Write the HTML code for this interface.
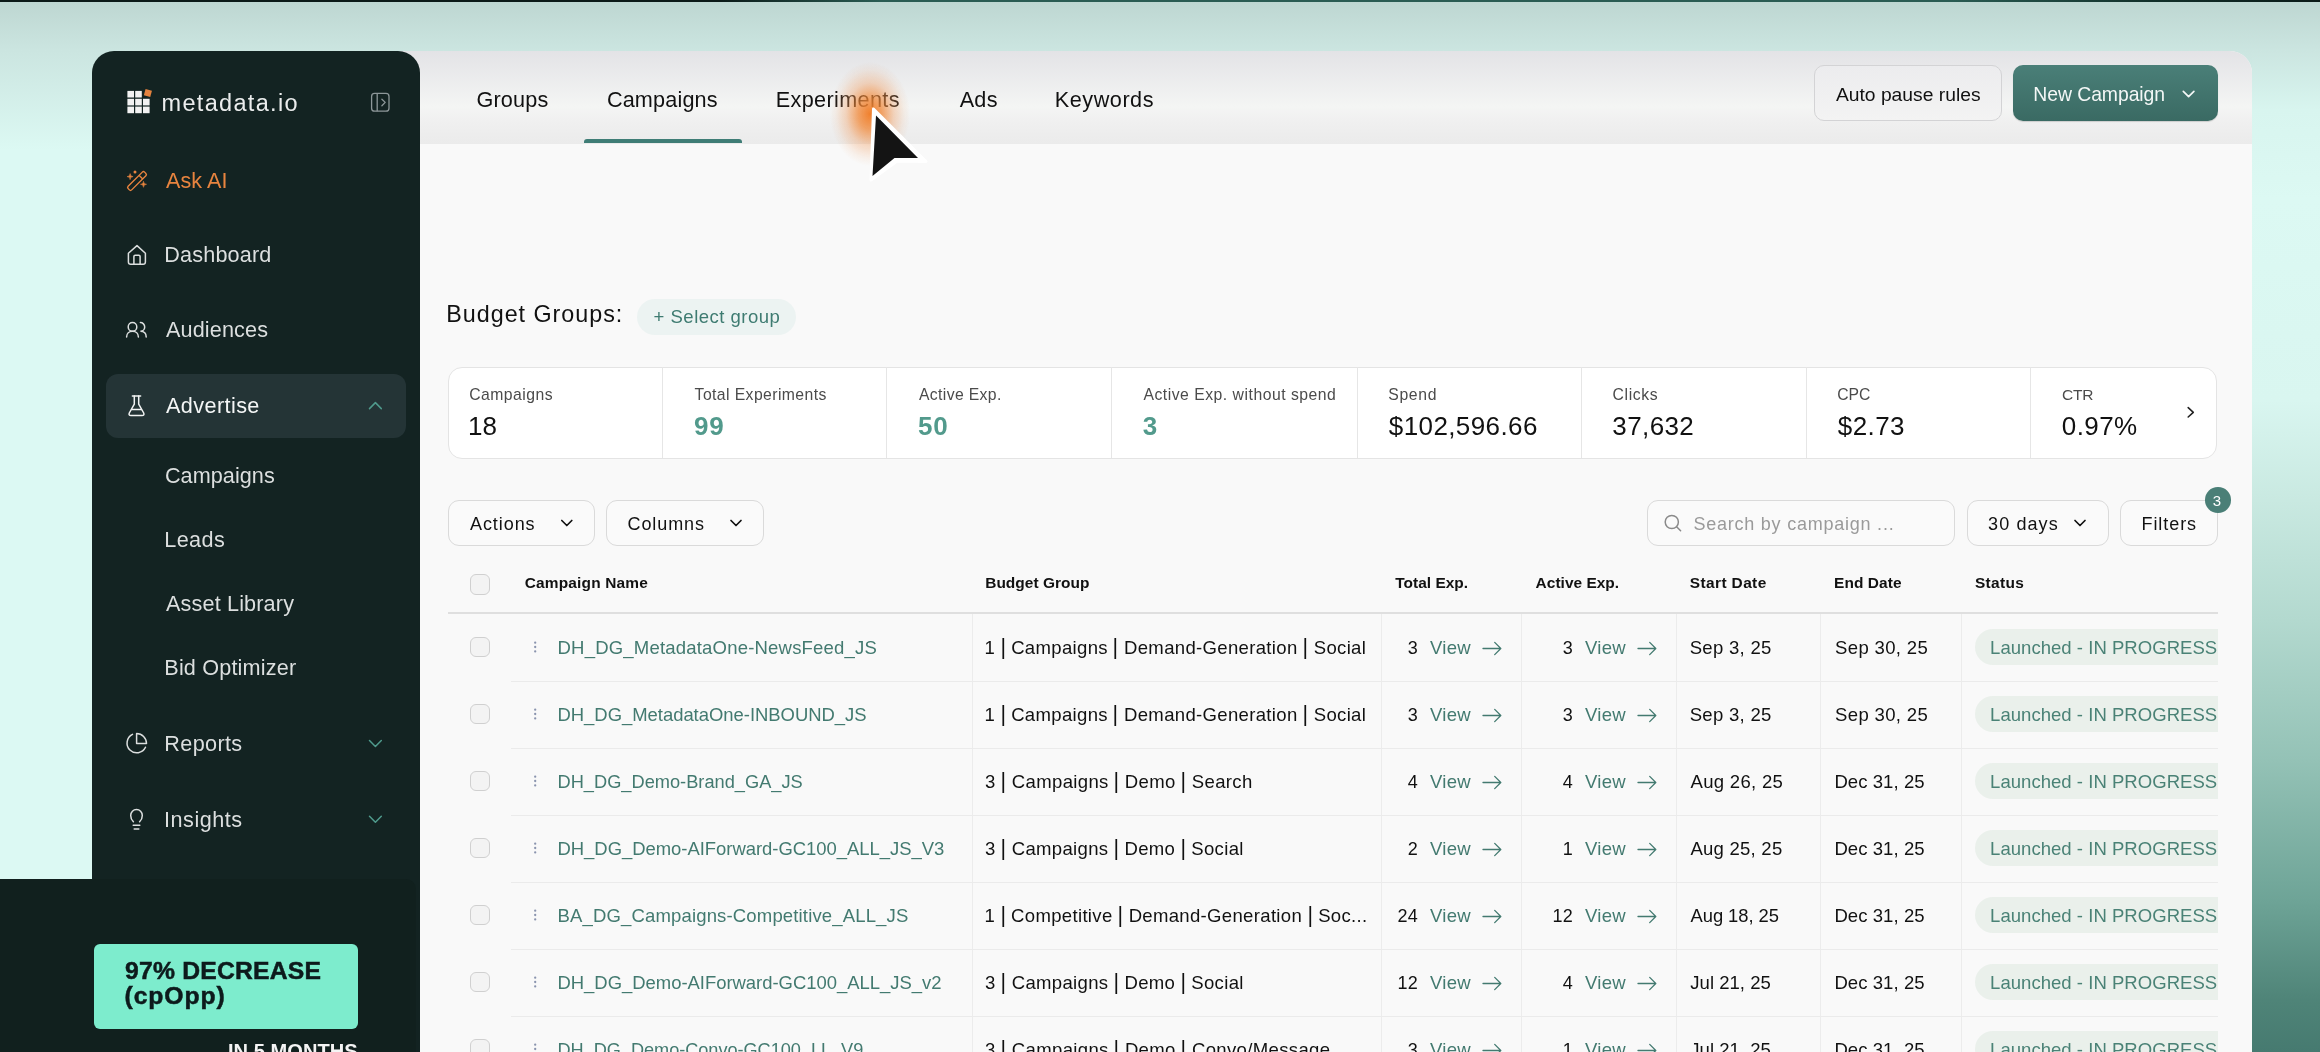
<!DOCTYPE html><html><head><meta charset="utf-8"><style>
*{margin:0;padding:0;box-sizing:border-box}
html,body{width:2320px;height:1052px;overflow:hidden}
body{font-family:"Liberation Sans",sans-serif;position:relative;background:#dcf9f3}
.t{position:absolute;white-space:nowrap}
#w{position:absolute;left:0;top:0;width:2320px;height:1052px;will-change:transform}
.abs{position:absolute}
svg{position:absolute;left:0;top:0;overflow:visible}
</style></head><body><div id="w">
<div class="abs" style="left:0px;top:0px;width:2320.0px;height:1052.0px;background:linear-gradient(180deg,#bdd6d1 0px,#cbe5e0 50px,#dcf9f3 150px,#dcf9f3 100%)"></div>
<div class="abs" style="left:2252px;top:0px;width:68.0px;height:1052.0px;background:linear-gradient(180deg,#bdd6d1 0px,#cbe5e0 50px,#d8f5ef 110px,#dcf9f3 200px,#d9f6f0 400px,#c9e9e1 500px,#b3d9cf 620px,#94c2b6 760px,#6ea497 900px,#4f8478 1000px,#467a70 1052px)"></div>
<div class="abs" style="left:0px;top:0px;width:2320.0px;height:2.0px;background:linear-gradient(90deg,#0b1a18 0px,#0b1a18 720px,#2a5c53 880px,#2a5c53 1950px,#12302a 2150px,#0b1a18 2320px)"></div>
<div class="abs" style="left:400px;top:51px;width:1852.0px;height:1001.0px;background:#f9f9f9;border-top-right-radius:22px;overflow:hidden"></div>
<div class="abs" style="left:400px;top:51px;width:1852.0px;height:92.5px;background:linear-gradient(180deg,#e3e3e6 0%,#f4f5f4 60%,#f0f0f0 75%,#ebebeb 100%);border-top-right-radius:22px"></div>
<div class="t" style="left:476.4px;top:89.1px;font-size:21.63px;line-height:21.63px;color:#111;letter-spacing:0.190px;">Groups</div>
<div class="t" style="left:606.9px;top:89.1px;font-size:21.63px;line-height:21.63px;color:#111;letter-spacing:0.162px;">Campaigns</div>
<div class="t" style="left:775.8px;top:89.1px;font-size:21.63px;line-height:21.63px;color:#111;letter-spacing:0.355px;">Experiments</div>
<div class="t" style="left:959.7px;top:89.1px;font-size:21.63px;line-height:21.63px;color:#111;letter-spacing:0.250px;">Ads</div>
<div class="t" style="left:1054.8px;top:89.1px;font-size:21.63px;line-height:21.63px;color:#111;letter-spacing:0.536px;">Keywords</div>
<div class="abs" style="left:583.5px;top:138.5px;width:158.5px;height:4.0px;background:#3f7d76;border-radius:3px 3px 0 0"></div>
<div class="abs" style="left:1813.8px;top:65.1px;width:188.0px;height:56.4px;border:1px solid #d3d3d5;border-radius:10px;background:linear-gradient(180deg,#ececee,#f3f3f3)"></div>
<div class="t" style="left:1835.9px;top:84.7px;font-size:19.27px;line-height:19.27px;color:#111;letter-spacing:0.003px;">Auto pause rules</div>
<div class="abs" style="left:2012.8px;top:65.1px;width:205.2px;height:56.4px;border-radius:10px;background:linear-gradient(180deg,#4a7f78,#3a6a63);box-shadow:0 1px 1px rgba(0,0,0,.15)"></div>
<div class="t" style="left:2033.3px;top:84.6px;font-size:19.39px;line-height:19.39px;color:#f3f7f6;letter-spacing:-0.059px;">New Campaign</div>
<div class="t" style="left:446.3px;top:303.1px;font-size:23.32px;line-height:23.32px;color:#111;letter-spacing:0.973px;">Budget Groups:</div>
<div class="abs" style="left:637.4px;top:298.9px;width:158.6px;height:36.1px;background:#ecf3f2;border-radius:18px"></div>
<div class="t" style="left:653.6px;top:307.5px;font-size:18.54px;line-height:18.54px;color:#3e7b71;letter-spacing:0.477px;">+ Select group</div>
<div class="abs" style="left:448px;top:366.5px;width:1769.0px;height:92.0px;background:#fff;border:1px solid #e4e4e4;border-radius:14px"></div>
<div class="abs" style="left:662.1px;top:367px;width:1.0px;height:91.0px;background:#e6e6e6"></div>
<div class="abs" style="left:886.3px;top:367px;width:1.0px;height:91.0px;background:#e6e6e6"></div>
<div class="abs" style="left:1110.8px;top:367px;width:1.0px;height:91.0px;background:#e6e6e6"></div>
<div class="abs" style="left:1356.8px;top:367px;width:1.0px;height:91.0px;background:#e6e6e6"></div>
<div class="abs" style="left:1581.0px;top:367px;width:1.0px;height:91.0px;background:#e6e6e6"></div>
<div class="abs" style="left:1805.7px;top:367px;width:1.0px;height:91.0px;background:#e6e6e6"></div>
<div class="abs" style="left:2029.7px;top:367px;width:1.0px;height:91.0px;background:#e6e6e6"></div>
<div class="t" style="left:469.2px;top:386.9px;font-size:15.75px;line-height:15.75px;color:#4b4b4b;letter-spacing:0.469px;">Campaigns</div>
<div class="t" style="left:468.0px;top:412.8px;font-size:26px;line-height:26px;color:#111;letter-spacing:0px;">18</div>
<div class="t" style="left:694.6px;top:386.9px;font-size:15.75px;line-height:15.75px;color:#4b4b4b;letter-spacing:0.409px;">Total Experiments</div>
<div class="t" style="left:694.1px;top:412.8px;font-size:26px;line-height:26px;color:#529a8c;font-weight:700;letter-spacing:0.8px;">99</div>
<div class="t" style="left:919.0px;top:386.9px;font-size:15.75px;line-height:15.75px;color:#4b4b4b;letter-spacing:0.350px;">Active Exp.</div>
<div class="t" style="left:918.1px;top:412.8px;font-size:26px;line-height:26px;color:#529a8c;font-weight:700;letter-spacing:0.8px;">50</div>
<div class="t" style="left:1143.4px;top:386.9px;font-size:15.75px;line-height:15.75px;color:#4b4b4b;letter-spacing:0.506px;">Active Exp. without spend</div>
<div class="t" style="left:1142.8px;top:412.8px;font-size:26px;line-height:26px;color:#529a8c;font-weight:700;letter-spacing:0.8px;">3</div>
<div class="t" style="left:1388.3px;top:386.9px;font-size:15.75px;line-height:15.75px;color:#4b4b4b;letter-spacing:0.637px;">Spend</div>
<div class="t" style="left:1388.8px;top:412.8px;font-size:26px;line-height:26px;color:#111;letter-spacing:0.4px;">$102,596.66</div>
<div class="t" style="left:1612.5px;top:386.9px;font-size:15.75px;line-height:15.75px;color:#4b4b4b;letter-spacing:0.650px;">Clicks</div>
<div class="t" style="left:1612.3px;top:412.8px;font-size:26px;line-height:26px;color:#111;letter-spacing:0.4px;">37,632</div>
<div class="t" style="left:1837.2px;top:386.9px;font-size:15.72px;line-height:15.72px;color:#4b4b4b;letter-spacing:-0.025px;">CPC</div>
<div class="t" style="left:1837.8px;top:412.8px;font-size:26px;line-height:26px;color:#111;letter-spacing:0.4px;">$2.73</div>
<div class="t" style="left:2062.0px;top:387.1px;font-size:15.49px;line-height:15.49px;color:#4b4b4b;letter-spacing:-0.150px;">CTR</div>
<div class="t" style="left:2061.8px;top:412.8px;font-size:26px;line-height:26px;color:#111;letter-spacing:0.4px;">0.97%</div>
<div class="abs" style="left:448px;top:500.3px;width:146.6px;height:45.9px;border:1.3px solid #dadada;border-radius:11px;background:#fafafa"></div>
<div class="t" style="left:470.0px;top:514.5px;font-size:18.03px;line-height:18.03px;color:#111;letter-spacing:0.925px;">Actions</div>
<div class="abs" style="left:606px;top:500.3px;width:157.6px;height:45.9px;border:1.3px solid #dadada;border-radius:11px;background:#fafafa"></div>
<div class="t" style="left:627.5px;top:514.5px;font-size:18.03px;line-height:18.03px;color:#111;letter-spacing:0.908px;">Columns</div>
<div class="abs" style="left:1646.7px;top:500.3px;width:308.6px;height:45.9px;border:1.3px solid #dadada;border-radius:11px;background:#fafafa"></div>
<div class="t" style="left:1693.4px;top:514.5px;font-size:18.03px;line-height:18.03px;color:#9a9a9a;letter-spacing:0.762px;">Search by campaign ...</div>
<div class="abs" style="left:1966.6px;top:500.3px;width:142.9px;height:45.9px;border:1.3px solid #dadada;border-radius:11px;background:#fafafa"></div>
<div class="t" style="left:1988.1px;top:514.5px;font-size:18.03px;line-height:18.03px;color:#111;letter-spacing:1.083px;">30 days</div>
<div class="abs" style="left:2120.2px;top:500.3px;width:97.6px;height:45.9px;border:1.3px solid #dadada;border-radius:11px;background:#fafafa"></div>
<div class="t" style="left:2141.5px;top:514.5px;font-size:18.03px;line-height:18.03px;color:#111;letter-spacing:0.925px;">Filters</div>
<div class="abs" style="left:2205px;top:487.2px;width:25.6px;height:25.6px;background:#4a7f77;border-radius:50%"></div>
<div class="t" style="left:2212.8px;top:493.3px;font-size:15px;line-height:15px;color:#fff;">3</div>
<div class="abs" style="left:469.5px;top:574.3px;width:20.5px;height:20.5px;border:1.4px solid #d0d0d0;border-radius:6px;background:#f3f3f3"></div>
<div class="t" style="left:524.7px;top:575.3px;font-size:15.45px;line-height:15.45px;color:#111;font-weight:700;letter-spacing:0.179px;">Campaign Name</div>
<div class="t" style="left:985.2px;top:575.3px;font-size:15.45px;line-height:15.45px;color:#111;font-weight:700;letter-spacing:0.045px;">Budget Group</div>
<div class="t" style="left:1395.2px;top:575.3px;font-size:15.45px;line-height:15.45px;color:#111;font-weight:700;letter-spacing:0.033px;">Total Exp.</div>
<div class="t" style="left:1535.6px;top:575.3px;font-size:15.45px;line-height:15.45px;color:#111;font-weight:700;letter-spacing:0.030px;">Active Exp.</div>
<div class="t" style="left:1689.8px;top:575.3px;font-size:15.45px;line-height:15.45px;color:#111;font-weight:700;letter-spacing:0.389px;">Start Date</div>
<div class="t" style="left:1834.0px;top:575.3px;font-size:15.45px;line-height:15.45px;color:#111;font-weight:700;letter-spacing:0.100px;">End Date</div>
<div class="t" style="left:1974.9px;top:575.3px;font-size:15.45px;line-height:15.45px;color:#111;font-weight:700;letter-spacing:0.370px;">Status</div>
<div class="abs" style="left:448px;top:612.3px;width:1770.0px;height:2.0px;background:#dfdfdf"></div>
<div class="abs" style="left:0;top:0;width:2218px;height:1052px;overflow:hidden">
<div class="abs" style="left:971.5px;top:614.3px;width:1.0px;height:437.7px;background:#ececec"></div>
<div class="abs" style="left:1380.5px;top:614.3px;width:1.0px;height:437.7px;background:#ececec"></div>
<div class="abs" style="left:1521.3px;top:614.3px;width:1.0px;height:437.7px;background:#ececec"></div>
<div class="abs" style="left:1676.1px;top:614.3px;width:1.0px;height:437.7px;background:#ececec"></div>
<div class="abs" style="left:1820.3px;top:614.3px;width:1.0px;height:437.7px;background:#ececec"></div>
<div class="abs" style="left:1961.0px;top:614.3px;width:1.0px;height:437.7px;background:#ececec"></div>
<div class="abs" style="left:511px;top:680.5px;width:1707.0px;height:1.0px;background:#ebebeb"></div>
<div class="abs" style="left:469.5px;top:636.8px;width:20.5px;height:20.5px;border:1.4px solid #d0d0d0;border-radius:6px;background:#f3f3f3"></div>
<div class="t" style="left:557.5px;top:638.9px;font-size:18.54px;line-height:18.54px;color:#437a70;letter-spacing:0.188px;">DH_DG_MetadataOne-NewsFeed_JS</div>
<div class="t" style="left:984.4px;top:638.9px;font-size:18.54px;line-height:18.54px;color:#111;letter-spacing:0.333px;">1 <span style="display:inline-block;transform:scale(1.15,1.2);transform-origin:50% 72%">|</span> Campaigns <span style="display:inline-block;transform:scale(1.15,1.2);transform-origin:50% 72%">|</span> Demand-Generation <span style="display:inline-block;transform:scale(1.15,1.2);transform-origin:50% 72%">|</span> Social</div>
<div class="t" style="right:800px;top:639.4px;font-size:18px;line-height:18px;color:#111;letter-spacing:0.3px">3</div>
<div class="t" style="left:1429.9px;top:638.9px;font-size:18.54px;line-height:18.54px;color:#437a70;letter-spacing:0.333px;">View</div>
<div class="t" style="right:645px;top:639.4px;font-size:18px;line-height:18px;color:#111;letter-spacing:0.3px">3</div>
<div class="t" style="left:1584.9px;top:638.9px;font-size:18.54px;line-height:18.54px;color:#437a70;letter-spacing:0.333px;">View</div>
<div class="t" style="left:1689.7px;top:638.9px;font-size:18.54px;line-height:18.54px;color:#111;letter-spacing:0.281px;">Sep 3, 25</div>
<div class="t" style="left:1835.1px;top:638.9px;font-size:18.54px;line-height:18.54px;color:#111;letter-spacing:0.333px;">Sep 30, 25</div>
<div class="abs" style="left:1975.4px;top:629px;width:324.6px;height:36.0px;background:#eaf0eb;border-radius:18px"></div>
<div class="t" style="left:1990.1px;top:638.9px;font-size:18.54px;line-height:18.54px;color:#4a8276;letter-spacing:0.024px;">Launched - IN PROGRESS</div>
<div class="abs" style="left:511px;top:747.5px;width:1707.0px;height:1.0px;background:#ebebeb"></div>
<div class="abs" style="left:469.5px;top:703.8px;width:20.5px;height:20.5px;border:1.4px solid #d0d0d0;border-radius:6px;background:#f3f3f3"></div>
<div class="t" style="left:557.5px;top:706.0px;font-size:18.47px;line-height:18.47px;color:#437a70;letter-spacing:-0.024px;">DH_DG_MetadataOne-INBOUND_JS</div>
<div class="t" style="left:984.4px;top:705.9px;font-size:18.54px;line-height:18.54px;color:#111;letter-spacing:0.333px;">1 <span style="display:inline-block;transform:scale(1.15,1.2);transform-origin:50% 72%">|</span> Campaigns <span style="display:inline-block;transform:scale(1.15,1.2);transform-origin:50% 72%">|</span> Demand-Generation <span style="display:inline-block;transform:scale(1.15,1.2);transform-origin:50% 72%">|</span> Social</div>
<div class="t" style="right:800px;top:706.4px;font-size:18px;line-height:18px;color:#111;letter-spacing:0.3px">3</div>
<div class="t" style="left:1429.9px;top:705.9px;font-size:18.54px;line-height:18.54px;color:#437a70;letter-spacing:0.333px;">View</div>
<div class="t" style="right:645px;top:706.4px;font-size:18px;line-height:18px;color:#111;letter-spacing:0.3px">3</div>
<div class="t" style="left:1584.9px;top:705.9px;font-size:18.54px;line-height:18.54px;color:#437a70;letter-spacing:0.333px;">View</div>
<div class="t" style="left:1689.7px;top:705.9px;font-size:18.54px;line-height:18.54px;color:#111;letter-spacing:0.281px;">Sep 3, 25</div>
<div class="t" style="left:1835.1px;top:705.9px;font-size:18.54px;line-height:18.54px;color:#111;letter-spacing:0.333px;">Sep 30, 25</div>
<div class="abs" style="left:1975.4px;top:696px;width:324.6px;height:36.0px;background:#eaf0eb;border-radius:18px"></div>
<div class="t" style="left:1990.1px;top:705.9px;font-size:18.54px;line-height:18.54px;color:#4a8276;letter-spacing:0.024px;">Launched - IN PROGRESS</div>
<div class="abs" style="left:511px;top:814.5px;width:1707.0px;height:1.0px;background:#ebebeb"></div>
<div class="abs" style="left:469.5px;top:770.8px;width:20.5px;height:20.5px;border:1.4px solid #d0d0d0;border-radius:6px;background:#f3f3f3"></div>
<div class="t" style="left:557.5px;top:773.2px;font-size:18.24px;line-height:18.24px;color:#437a70;letter-spacing:0.000px;">DH_DG_Demo-Brand_GA_JS</div>
<div class="t" style="left:985.0px;top:772.9px;font-size:18.54px;line-height:18.54px;color:#111;letter-spacing:0.344px;">3 <span style="display:inline-block;transform:scale(1.15,1.2);transform-origin:50% 72%">|</span> Campaigns <span style="display:inline-block;transform:scale(1.15,1.2);transform-origin:50% 72%">|</span> Demo <span style="display:inline-block;transform:scale(1.15,1.2);transform-origin:50% 72%">|</span> Search</div>
<div class="t" style="right:800px;top:773.4px;font-size:18px;line-height:18px;color:#111;letter-spacing:0.3px">4</div>
<div class="t" style="left:1429.9px;top:772.9px;font-size:18.54px;line-height:18.54px;color:#437a70;letter-spacing:0.333px;">View</div>
<div class="t" style="right:645px;top:773.4px;font-size:18px;line-height:18px;color:#111;letter-spacing:0.3px">4</div>
<div class="t" style="left:1584.9px;top:772.9px;font-size:18.54px;line-height:18.54px;color:#437a70;letter-spacing:0.333px;">View</div>
<div class="t" style="left:1690.5px;top:772.9px;font-size:18.54px;line-height:18.54px;color:#111;letter-spacing:0.306px;">Aug 26, 25</div>
<div class="t" style="left:1834.4px;top:772.9px;font-size:18.54px;line-height:18.54px;color:#111;letter-spacing:0.061px;">Dec 31, 25</div>
<div class="abs" style="left:1975.4px;top:763px;width:324.6px;height:36.0px;background:#eaf0eb;border-radius:18px"></div>
<div class="t" style="left:1990.1px;top:772.9px;font-size:18.54px;line-height:18.54px;color:#4a8276;letter-spacing:0.024px;">Launched - IN PROGRESS</div>
<div class="abs" style="left:511px;top:881.5px;width:1707.0px;height:1.0px;background:#ebebeb"></div>
<div class="abs" style="left:469.5px;top:837.8px;width:20.5px;height:20.5px;border:1.4px solid #d0d0d0;border-radius:6px;background:#f3f3f3"></div>
<div class="t" style="left:557.5px;top:840.0px;font-size:18.45px;line-height:18.45px;color:#437a70;letter-spacing:-0.024px;">DH_DG_Demo-AIForward-GC100_ALL_JS_V3</div>
<div class="t" style="left:985.0px;top:839.9px;font-size:18.54px;line-height:18.54px;color:#111;letter-spacing:0.325px;">3 <span style="display:inline-block;transform:scale(1.15,1.2);transform-origin:50% 72%">|</span> Campaigns <span style="display:inline-block;transform:scale(1.15,1.2);transform-origin:50% 72%">|</span> Demo <span style="display:inline-block;transform:scale(1.15,1.2);transform-origin:50% 72%">|</span> Social</div>
<div class="t" style="right:800px;top:840.4px;font-size:18px;line-height:18px;color:#111;letter-spacing:0.3px">2</div>
<div class="t" style="left:1429.9px;top:839.9px;font-size:18.54px;line-height:18.54px;color:#437a70;letter-spacing:0.333px;">View</div>
<div class="t" style="right:645px;top:840.4px;font-size:18px;line-height:18px;color:#111;letter-spacing:0.3px">1</div>
<div class="t" style="left:1584.9px;top:839.9px;font-size:18.54px;line-height:18.54px;color:#437a70;letter-spacing:0.333px;">View</div>
<div class="t" style="left:1690.5px;top:839.9px;font-size:18.54px;line-height:18.54px;color:#111;letter-spacing:0.228px;">Aug 25, 25</div>
<div class="t" style="left:1834.4px;top:839.9px;font-size:18.54px;line-height:18.54px;color:#111;letter-spacing:0.061px;">Dec 31, 25</div>
<div class="abs" style="left:1975.4px;top:830px;width:324.6px;height:36.0px;background:#eaf0eb;border-radius:18px"></div>
<div class="t" style="left:1990.1px;top:839.9px;font-size:18.54px;line-height:18.54px;color:#4a8276;letter-spacing:0.024px;">Launched - IN PROGRESS</div>
<div class="abs" style="left:511px;top:948.5px;width:1707.0px;height:1.0px;background:#ebebeb"></div>
<div class="abs" style="left:469.5px;top:904.8px;width:20.5px;height:20.5px;border:1.4px solid #d0d0d0;border-radius:6px;background:#f3f3f3"></div>
<div class="t" style="left:557.5px;top:906.9px;font-size:18.54px;line-height:18.54px;color:#437a70;letter-spacing:0.144px;">BA_DG_Campaigns-Competitive_ALL_JS</div>
<div class="t" style="left:984.4px;top:906.9px;font-size:18.54px;line-height:18.54px;color:#111;letter-spacing:0.325px;">1 <span style="display:inline-block;transform:scale(1.15,1.2);transform-origin:50% 72%">|</span> Competitive <span style="display:inline-block;transform:scale(1.15,1.2);transform-origin:50% 72%">|</span> Demand-Generation <span style="display:inline-block;transform:scale(1.15,1.2);transform-origin:50% 72%">|</span> Soc...</div>
<div class="t" style="right:800px;top:907.4px;font-size:18px;line-height:18px;color:#111;letter-spacing:0.3px">24</div>
<div class="t" style="left:1429.9px;top:906.9px;font-size:18.54px;line-height:18.54px;color:#437a70;letter-spacing:0.333px;">View</div>
<div class="t" style="right:645px;top:907.4px;font-size:18px;line-height:18px;color:#111;letter-spacing:0.3px">12</div>
<div class="t" style="left:1584.9px;top:906.9px;font-size:18.54px;line-height:18.54px;color:#437a70;letter-spacing:0.333px;">View</div>
<div class="t" style="left:1690.5px;top:907.0px;font-size:18.39px;line-height:18.39px;color:#111;letter-spacing:-0.044px;">Aug 18, 25</div>
<div class="t" style="left:1834.4px;top:906.9px;font-size:18.54px;line-height:18.54px;color:#111;letter-spacing:0.061px;">Dec 31, 25</div>
<div class="abs" style="left:1975.4px;top:897px;width:324.6px;height:36.0px;background:#eaf0eb;border-radius:18px"></div>
<div class="t" style="left:1990.1px;top:906.9px;font-size:18.54px;line-height:18.54px;color:#4a8276;letter-spacing:0.024px;">Launched - IN PROGRESS</div>
<div class="abs" style="left:511px;top:1015.5px;width:1707.0px;height:1.0px;background:#ebebeb"></div>
<div class="abs" style="left:469.5px;top:971.8px;width:20.5px;height:20.5px;border:1.4px solid #d0d0d0;border-radius:6px;background:#f3f3f3"></div>
<div class="t" style="left:557.5px;top:974.0px;font-size:18.46px;line-height:18.46px;color:#437a70;letter-spacing:-0.019px;">DH_DG_Demo-AIForward-GC100_ALL_JS_v2</div>
<div class="t" style="left:985.0px;top:973.9px;font-size:18.54px;line-height:18.54px;color:#111;letter-spacing:0.325px;">3 <span style="display:inline-block;transform:scale(1.15,1.2);transform-origin:50% 72%">|</span> Campaigns <span style="display:inline-block;transform:scale(1.15,1.2);transform-origin:50% 72%">|</span> Demo <span style="display:inline-block;transform:scale(1.15,1.2);transform-origin:50% 72%">|</span> Social</div>
<div class="t" style="right:800px;top:974.4px;font-size:18px;line-height:18px;color:#111;letter-spacing:0.3px">12</div>
<div class="t" style="left:1429.9px;top:973.9px;font-size:18.54px;line-height:18.54px;color:#437a70;letter-spacing:0.333px;">View</div>
<div class="t" style="right:645px;top:974.4px;font-size:18px;line-height:18px;color:#111;letter-spacing:0.3px">4</div>
<div class="t" style="left:1584.9px;top:973.9px;font-size:18.54px;line-height:18.54px;color:#437a70;letter-spacing:0.333px;">View</div>
<div class="t" style="left:1690.3px;top:973.9px;font-size:18.54px;line-height:18.54px;color:#111;letter-spacing:0.017px;">Jul 21, 25</div>
<div class="t" style="left:1834.4px;top:973.9px;font-size:18.54px;line-height:18.54px;color:#111;letter-spacing:0.061px;">Dec 31, 25</div>
<div class="abs" style="left:1975.4px;top:964px;width:324.6px;height:36.0px;background:#eaf0eb;border-radius:18px"></div>
<div class="t" style="left:1990.1px;top:973.9px;font-size:18.54px;line-height:18.54px;color:#4a8276;letter-spacing:0.024px;">Launched - IN PROGRESS</div>
<div class="abs" style="left:469.5px;top:1038.8px;width:20.5px;height:20.5px;border:1.4px solid #d0d0d0;border-radius:6px;background:#f3f3f3"></div>
<div class="t" style="left:557.5px;top:1041.2px;font-size:18.16px;line-height:18.16px;color:#437a70;letter-spacing:-0.039px;">DH_DG_Demo-Convo-GC100_LL_V9</div>
<div class="t" style="left:985.0px;top:1040.9px;font-size:18.54px;line-height:18.54px;color:#111;letter-spacing:0.350px;">3 <span style="display:inline-block;transform:scale(1.15,1.2);transform-origin:50% 72%">|</span> Campaigns <span style="display:inline-block;transform:scale(1.15,1.2);transform-origin:50% 72%">|</span> Demo <span style="display:inline-block;transform:scale(1.15,1.2);transform-origin:50% 72%">|</span> Convo/Message</div>
<div class="t" style="right:800px;top:1041.4px;font-size:18px;line-height:18px;color:#111;letter-spacing:0.3px">3</div>
<div class="t" style="left:1429.9px;top:1040.9px;font-size:18.54px;line-height:18.54px;color:#437a70;letter-spacing:0.333px;">View</div>
<div class="t" style="right:645px;top:1041.4px;font-size:18px;line-height:18px;color:#111;letter-spacing:0.3px">1</div>
<div class="t" style="left:1584.9px;top:1040.9px;font-size:18.54px;line-height:18.54px;color:#437a70;letter-spacing:0.333px;">View</div>
<div class="t" style="left:1690.3px;top:1040.9px;font-size:18.54px;line-height:18.54px;color:#111;letter-spacing:0.017px;">Jul 21, 25</div>
<div class="t" style="left:1834.4px;top:1040.9px;font-size:18.54px;line-height:18.54px;color:#111;letter-spacing:0.061px;">Dec 31, 25</div>
<div class="abs" style="left:1975.4px;top:1031px;width:324.6px;height:36.0px;background:#eaf0eb;border-radius:18px"></div>
<div class="t" style="left:1990.1px;top:1040.9px;font-size:18.54px;line-height:18.54px;color:#4a8276;letter-spacing:0.024px;">Launched - IN PROGRESS</div>
</div>
<div class="abs" style="left:92px;top:51px;width:328.0px;height:1001.0px;background:#132322;border-top-left-radius:22px;border-top-right-radius:22px"></div>
<div class="abs" style="left:106px;top:374px;width:300.0px;height:63.5px;background:#243436;border-radius:12px"></div>
<div class="t" style="left:161.5px;top:91.5px;font-size:23.5px;line-height:23.5px;color:#ebeded;letter-spacing:1.325px;">metadata.io</div>
<div class="t" style="left:166.1px;top:169.7px;font-size:21.56px;line-height:21.56px;color:#e8843f;letter-spacing:0.060px;">Ask AI</div>
<div class="t" style="left:164.3px;top:244.4px;font-size:21.63px;line-height:21.63px;color:#dcdfdf;letter-spacing:0.156px;">Dashboard</div>
<div class="t" style="left:166.0px;top:319.4px;font-size:21.63px;line-height:21.63px;color:#dcdfdf;letter-spacing:0.125px;">Audiences</div>
<div class="t" style="left:166.0px;top:395.4px;font-size:21.63px;line-height:21.63px;color:#f4f6f6;letter-spacing:0.406px;">Advertise</div>
<div class="t" style="left:164.9px;top:465.4px;font-size:21.63px;line-height:21.63px;color:#dcdfdf;letter-spacing:0.062px;">Campaigns</div>
<div class="t" style="left:164.3px;top:529.4px;font-size:21.63px;line-height:21.63px;color:#dcdfdf;letter-spacing:0.375px;">Leads</div>
<div class="t" style="left:166.0px;top:593.4px;font-size:21.63px;line-height:21.63px;color:#dcdfdf;letter-spacing:0.146px;">Asset Library</div>
<div class="t" style="left:164.3px;top:657.4px;font-size:21.63px;line-height:21.63px;color:#dcdfdf;letter-spacing:0.167px;">Bid Optimizer</div>
<div class="t" style="left:164.3px;top:733.4px;font-size:21.63px;line-height:21.63px;color:#dcdfdf;letter-spacing:0.350px;">Reports</div>
<div class="t" style="left:164.0px;top:808.9px;font-size:21.63px;line-height:21.63px;color:#dcdfdf;letter-spacing:0.514px;">Insights</div>
<div class="abs" style="left:0px;top:879px;width:416.0px;height:173.0px;background:#11201e;border-top-right-radius:10px"></div>
<div class="abs" style="left:94.2px;top:944.2px;width:263.8px;height:84.8px;background:#7deccd;border-radius:6px"></div>
<div class="t" style="left:125.0px;top:959.1px;font-size:24.72px;line-height:24.72px;color:#0d1a1c;font-weight:700;letter-spacing:0.214px;-webkit-text-stroke:0.5px #0d1a1c;">97% DECREASE</div>
<div class="t" style="left:124.6px;top:984.4px;font-size:24.72px;line-height:24.72px;color:#0d1a1c;font-weight:700;letter-spacing:0.892px;-webkit-text-stroke:0.5px #0d1a1c;">(cpOpp)</div>
<div class="t" style="left:228.0px;top:1041.0px;font-size:20.09px;line-height:20.09px;color:#f4f4f4;font-weight:700;letter-spacing:0.030px;">IN 5 MONTHS</div>
<svg width="2320" height="1052" viewBox="0 0 2320 1052"><rect x="127.4" y="90.9" width="6.6" height="6.6" fill="#f2f2f2"/><rect x="135.2" y="90.9" width="6.6" height="6.6" fill="#f2f2f2"/><rect x="127.4" y="98.8" width="6.6" height="6.6" fill="#f2f2f2"/><rect x="135.2" y="98.8" width="6.6" height="6.6" fill="#f2f2f2"/><rect x="143.0" y="98.8" width="6.6" height="6.6" fill="#f2f2f2"/><rect x="127.4" y="106.6" width="6.6" height="6.6" fill="#f2f2f2"/><rect x="135.2" y="106.6" width="6.6" height="6.6" fill="#f2f2f2"/><rect x="143.0" y="106.6" width="6.6" height="6.6" fill="#f2f2f2"/><rect x="144.6" y="89.7" width="6.6" height="6.6" fill="#e3823f" transform="rotate(15 147.9 93)"/><g fill="none" stroke="#8d9799" stroke-width="1.3"><rect x="371.6" y="93.4" width="17.4" height="17.8" rx="3"/><path d="M377.2,93.4V111.2"/><path d="M381.9,99.2L385.2,102.4L381.9,105.7" stroke-linecap="round" stroke-linejoin="round"/></g><g fill="none" stroke="#e8843f" stroke-width="1.4"><rect x="125.35" y="178.5" width="23.3" height="5" rx="1.6" transform="rotate(-45 137 181)"/><path d="M139.2,175.5 L142.8,179.1" /></g><path d="M130.1,173.6 Q130.1,176.6 133.1,176.6 Q130.1,176.6 130.1,179.6 Q130.1,176.6 127.1,176.6 Q130.1,176.6 130.1,173.6Z" fill="#e8843f" stroke="#e8843f" stroke-width="0.6"/><path d="M143.5,181.3 Q143.5,184.3 146.5,184.3 Q143.5,184.3 143.5,187.3 Q143.5,184.3 140.5,184.3 Q143.5,184.3 143.5,181.3Z" fill="#e8843f" stroke="#e8843f" stroke-width="0.6"/><circle cx="135" cy="171.9" r="1.5" fill="#e8843f"/><g fill="none" stroke="#dcdfdf" stroke-width="1.5" stroke-linejoin="round"><path d="M128.4,253.2 L137,245.6 L145.4,253.2 V262 Q145.4,264.3 143.1,264.3 H130.7 Q128.4,264.3 128.4,262 Z"/><path d="M133.9,264.3 V256.4 Q133.9,255.2 135.1,255.2 H138.9 Q140.1,255.2 140.1,256.4 V264.3"/></g><g fill="none" stroke="#dcdfdf" stroke-width="1.5" stroke-linecap="round"><circle cx="132.5" cy="326.9" r="4.3"/><path d="M126.6,337 C126.6,333.3 129.2,331.2 132.5,331.2 C135.8,331.2 138.4,333.3 138.4,337"/><path d="M140.4,322.6 A4.3,4.3 0 0 1 140.4,331.2 C143.8,331.2 146.2,333.3 146.2,337"/></g><g fill="none" stroke="#f2f4f4" stroke-width="1.5" stroke-linejoin="round" stroke-linecap="round"><path d="M132.4,396 H140.6"/><path d="M134.3,396 V404.2 L129.3,413 Q128.3,415.5 131,415.5 H142 Q144.7,415.5 143.7,413 L138.7,404.2 V396"/><path d="M131.6,409.6 H141.4"/></g><path d="M369.5,408.6 L375.4,402.6 L381.3,408.6" fill="none" stroke="#4f9a8c" stroke-width="1.5" stroke-linecap="round" stroke-linejoin="round"/><g fill="none" stroke="#dcdfdf" stroke-width="1.5" stroke-linecap="round" stroke-linejoin="round"><path d="M132.5,734.4 A9.7,9.7 0 1 0 145.5,747.3"/><path d="M136.6,733.6 V743.5 H146.5 A9.9,9.9 0 0 0 136.6,733.6 Z"/></g><path d="M369.5,740.5 L375.4,746.5 L381.3,740.5" fill="none" stroke="#4f9a8c" stroke-width="1.5" stroke-linecap="round" stroke-linejoin="round"/><g fill="none" stroke="#dcdfdf" stroke-width="1.5" stroke-linecap="round"><path d="M133.4,821.8 C131.6,820 130.7,818 130.7,815.4 A5.8,5.8 0 0 1 142.3,815.4 C142.3,818 141.4,820 139.6,821.8"/><path d="M133.2,825.3 H139.8"/><path d="M134.2,829.1 H138.8"/></g><path d="M369.5,816.3 L375.4,822.3 L381.3,816.3" fill="none" stroke="#4f9a8c" stroke-width="1.5" stroke-linecap="round" stroke-linejoin="round"/><path d="M561.8,520.5 L566.8,525.5 L571.8,520.5" fill="none" stroke="#111" stroke-width="1.7" stroke-linecap="round" stroke-linejoin="round"/><path d="M731,520.5 L736,525.5 L741,520.5" fill="none" stroke="#111" stroke-width="1.7" stroke-linecap="round" stroke-linejoin="round"/><path d="M2075,520.5 L2080,525.5 L2085,520.5" fill="none" stroke="#111" stroke-width="1.7" stroke-linecap="round" stroke-linejoin="round"/><path d="M2183.3,91.3 L2188.6,96.6 L2193.9,91.3" fill="none" stroke="#f3f7f6" stroke-width="1.7" stroke-linecap="round" stroke-linejoin="round"/><path d="M2188.2,407.6 L2193.3,412.3 L2188.2,417" fill="none" stroke="#222" stroke-width="1.6" stroke-linecap="round" stroke-linejoin="round"/><g fill="none" stroke="#8a8a8a" stroke-width="1.5" stroke-linecap="round"><circle cx="1671.8" cy="522" r="6.6"/><path d="M1676.6,526.8 L1680.6,530.8"/></g><circle cx="535.2" cy="642.7" r="1.15" fill="#8a94ae"/><circle cx="535.2" cy="647" r="1.15" fill="#8a94ae"/><circle cx="535.2" cy="651.4" r="1.15" fill="#8a94ae"/><path d="M1483,648.5 H1500.5 M1494.7,642.4 L1500.8,648.5 L1494.7,654.6" fill="none" stroke="#437a70" stroke-width="1.3" stroke-linecap="round" stroke-linejoin="round"/><path d="M1638,648.5 H1655.5 M1649.7,642.4 L1655.8,648.5 L1649.7,654.6" fill="none" stroke="#437a70" stroke-width="1.3" stroke-linecap="round" stroke-linejoin="round"/><circle cx="535.2" cy="709.7" r="1.15" fill="#8a94ae"/><circle cx="535.2" cy="714" r="1.15" fill="#8a94ae"/><circle cx="535.2" cy="718.4" r="1.15" fill="#8a94ae"/><path d="M1483,715.5 H1500.5 M1494.7,709.4 L1500.8,715.5 L1494.7,721.6" fill="none" stroke="#437a70" stroke-width="1.3" stroke-linecap="round" stroke-linejoin="round"/><path d="M1638,715.5 H1655.5 M1649.7,709.4 L1655.8,715.5 L1649.7,721.6" fill="none" stroke="#437a70" stroke-width="1.3" stroke-linecap="round" stroke-linejoin="round"/><circle cx="535.2" cy="776.7" r="1.15" fill="#8a94ae"/><circle cx="535.2" cy="781" r="1.15" fill="#8a94ae"/><circle cx="535.2" cy="785.4" r="1.15" fill="#8a94ae"/><path d="M1483,782.5 H1500.5 M1494.7,776.4 L1500.8,782.5 L1494.7,788.6" fill="none" stroke="#437a70" stroke-width="1.3" stroke-linecap="round" stroke-linejoin="round"/><path d="M1638,782.5 H1655.5 M1649.7,776.4 L1655.8,782.5 L1649.7,788.6" fill="none" stroke="#437a70" stroke-width="1.3" stroke-linecap="round" stroke-linejoin="round"/><circle cx="535.2" cy="843.7" r="1.15" fill="#8a94ae"/><circle cx="535.2" cy="848" r="1.15" fill="#8a94ae"/><circle cx="535.2" cy="852.4" r="1.15" fill="#8a94ae"/><path d="M1483,849.5 H1500.5 M1494.7,843.4 L1500.8,849.5 L1494.7,855.6" fill="none" stroke="#437a70" stroke-width="1.3" stroke-linecap="round" stroke-linejoin="round"/><path d="M1638,849.5 H1655.5 M1649.7,843.4 L1655.8,849.5 L1649.7,855.6" fill="none" stroke="#437a70" stroke-width="1.3" stroke-linecap="round" stroke-linejoin="round"/><circle cx="535.2" cy="910.7" r="1.15" fill="#8a94ae"/><circle cx="535.2" cy="915" r="1.15" fill="#8a94ae"/><circle cx="535.2" cy="919.4" r="1.15" fill="#8a94ae"/><path d="M1483,916.5 H1500.5 M1494.7,910.4 L1500.8,916.5 L1494.7,922.6" fill="none" stroke="#437a70" stroke-width="1.3" stroke-linecap="round" stroke-linejoin="round"/><path d="M1638,916.5 H1655.5 M1649.7,910.4 L1655.8,916.5 L1649.7,922.6" fill="none" stroke="#437a70" stroke-width="1.3" stroke-linecap="round" stroke-linejoin="round"/><circle cx="535.2" cy="977.7" r="1.15" fill="#8a94ae"/><circle cx="535.2" cy="982" r="1.15" fill="#8a94ae"/><circle cx="535.2" cy="986.4" r="1.15" fill="#8a94ae"/><path d="M1483,983.5 H1500.5 M1494.7,977.4 L1500.8,983.5 L1494.7,989.6" fill="none" stroke="#437a70" stroke-width="1.3" stroke-linecap="round" stroke-linejoin="round"/><path d="M1638,983.5 H1655.5 M1649.7,977.4 L1655.8,983.5 L1649.7,989.6" fill="none" stroke="#437a70" stroke-width="1.3" stroke-linecap="round" stroke-linejoin="round"/><circle cx="535.2" cy="1044.7" r="1.15" fill="#8a94ae"/><circle cx="535.2" cy="1049" r="1.15" fill="#8a94ae"/><circle cx="535.2" cy="1053.4" r="1.15" fill="#8a94ae"/><path d="M1483,1050.5 H1500.5 M1494.7,1044.4 L1500.8,1050.5 L1494.7,1056.6" fill="none" stroke="#437a70" stroke-width="1.3" stroke-linecap="round" stroke-linejoin="round"/><path d="M1638,1050.5 H1655.5 M1649.7,1044.4 L1655.8,1050.5 L1649.7,1056.6" fill="none" stroke="#437a70" stroke-width="1.3" stroke-linecap="round" stroke-linejoin="round"/></svg>
<div class="abs" style="left:800px;top:40px;width:150px;height:160px;background:radial-gradient(ellipse 40px 52px at 70px 74px,rgba(240,128,45,1) 0%,rgba(240,135,55,.75) 30%,rgba(240,150,85,.35) 60%,rgba(240,160,100,.1) 85%,rgba(240,160,100,0) 100%)"></div>
<svg width="2320" height="1052" viewBox="0 0 2320 1052"><path d="M873.5,109 L926,161.5 L897,161 L871,180 Z" fill="#fff" stroke="#fff" stroke-width="3" stroke-linejoin="round"/><path d="M876,115.5 L918,158 L894.5,158 L872.5,176 Z" fill="#141414"/></svg>
</div></body></html>
